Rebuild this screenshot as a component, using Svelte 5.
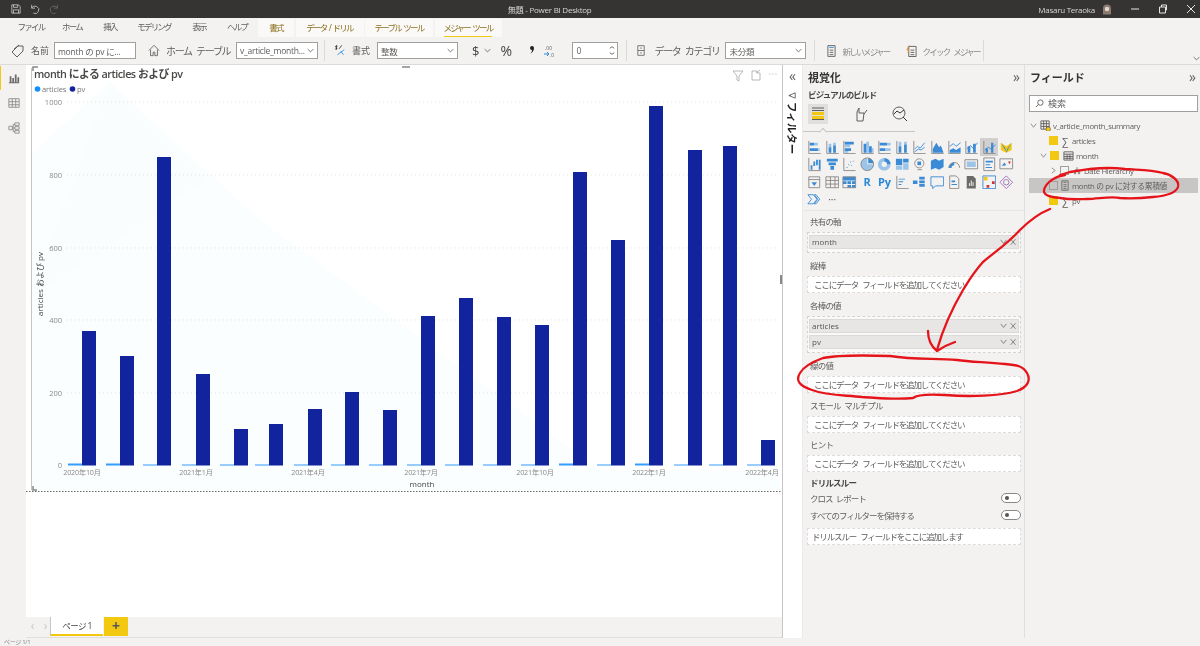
<script>
  const tabs = [['ファイル',38],['ホーム',44],['挿入',32],['モデリング',56],['表示',34],['ヘルプ',42]];
  const ctx = [['書式',36,false],['データ / ドリル',68,false],['テーブル ツール',68,false],['メジャー ツール',67,true]];
  const bars = [[82,331,2],[120,356,2],[157,157,1],[196,374,1],[234,429,1],[269,424,1],[308,409,1],[345,392,1],[383,410,1],[421,316,1],[459,298,1],[497,317,1],[535,325,1],[573,172,2],[611,240,1],[649,106,2],[688,150,1],[723,146,1],[761,440,1]];
  const yt = [[1000,102],[800,175],[600,248],[400,320],[200,393],[0,465]];
  const xt = [['2020年10月',82],['2021年1月',196],['2021年4月',308],['2021年7月',421],['2021年10月',535],['2022年1月',649],['2022年4月',762]];
  const ax = 'M2 1V15H15';
  const icons = [
    {g:ax,b:'M3 3h5v3H3zM3 9h9v3H3z',l:'M8 3h4v3H8zM12 9h2v3h-2z'},
    {g:ax,b:'M4 8h3v6H4zM9 6h3v8H9z',l:'M4 4h3v4H4zM9 3h3v3H9z'},
    {g:ax,b:'M3 2h10v3H3zM3 9h7v3H3z',l:'M3 5h6v3H3zM3 12h4v2H3z'},
    {g:ax,b:'M4 4h3v10H4zM10 7h3v7h-3z',l:'M7 2h3v12H7zM13 9h2v5h-2z'},
    {g:ax,b:'M3 3h8v3H3zM3 9h6v3H3z',l:'M11 3h4v3h-4zM9 9h6v3H9z'},
    {g:ax,b:'M4 7h3v7H4zM10 5h3v9h-3z',l:'M4 2h3v5H4zM10 2h3v3h-3z'},
    {g:ax,s:'M3 10l3-3 3 2 5-6M3 13l4-3 3 1 4-3'},
    {g:ax,b:'M3 14V10l4-7 3 5 2-2 3 8z'},
    {g:ax,b:'M3 14v-3l4-2 3 2 5-3v6z',s:'M3 7l4-3 3 3 5-4'},
    {g:ax,b:'M4 7h3v7H4zM10 4h3v10h-3z',s:'M3 10l4-4 3 3 5-6'},
    {g:ax,b:'M4 9h2.500v5H4zM10 3h2.500v11H10z',s:'M3 11l4-3 3 2 5-5'},
    {y:'M2 3l6 4v7l-6-3zM8 7l6-4v8l-6 3z',b:'M2 3l5 6 1 5 6-11-5 7-1 3z'},
    {g:ax,b:'M4 9h2v5H4zM7 5h2v5H7zM10 3h2v6h-2zM13 3h2v11h-2z'},
    {b:'M2 2h12v3H2zM4 6h8v3H4zM6 10h4v4H6z'},
    {g:ax,b:'M5 11h1v1H5zM7 8h1v1H7zM10 9h1v1h-1zM12 4h1v1h-1zM9 5h1v1H9z'},
    {l:'M8 1a7 7 0 1 0 7 7H8z',g:'M8 1a7 7 0 1 1-7 7 7 7 0 0 1 7-7z',b:'M9 1a7 7 0 0 1 6 6H9z'},
    {b:'M8 1a7 7 0 0 1 7 7h-4a3 3 0 0 0-3-3z',l:'M15 8a7 7 0 1 1-7-7v4a3 3 0 1 0 3 3z'},
    {b:'M1 2h7v7H1zM9 2h6v4H9z',l:'M1 10h7v4H1zM9 7h6v7H9z'},
    {g:'M8 2a5 5 0 1 0 .1 0zM6 14h5',b:'M6 5h4v4H6z'},
    {b:'M1 4l5-2 4 2 5-2v9l-5 3-4-2-5 2z'},
    {g:'M2 12a6 6 0 0 1 12 0',b:'M2 12a6 6 0 0 1 6-6v3a3 3 0 0 0-3 3z'},
    {g:'M1 3h14v10H1z',l:'M3 5h10v6H3z'},
    {g:'M2 1h12v14H2z',b:'M4 4h8v2H4zM4 8h5v1H4zM4 11h7v1H4z'},
    {g:'M1 2h14v11H1z',b:'M3 10l3-4 2 3z',r:'M10 5h3l-1.500 3z'},
    {g:'M2 2h12v12H2zM2 5h12',b:'M5 8h6l-3 4z'},
    {g:'M1 2h14v12H1zM1 6h14M1 10h14M6 2v12M11 2v12'},
    {g:'M1 2h14v12H1z',b:'M1 2h14v4H1zM1 7h4v3H1zM6 7h4v3H6zM11 7h4v3h-4zM6 11h4v3H6zM11 11h4v3h-4z'},
    {t:'R'},{t:'Py'},
    {g:ax,b:'M4 4h7v1H4zM4 7h5v1H4zM4 10h3v1H4z',r:''},
    {b:'M1 6h5v4H1zM8 2h6v3H8zM8 6h6v3H8zM8 10h6v3H8z'},
    {s:'M1 2h14v10H6l-3 3v-3H1z'},
    {g:'M3 1h7l3 3v11H3z',b:'M5 6h4v2H5zM5 10h6v1H5z'},
    {d:'M3 1h7l3 3v11H3z',w:'M6 12V9M8 12V6M10 12V8'},
    {s:'M1 1h14v14H1z',y:'M2 2h4v4H2z',r2:'M11 7h3v3h-3zM5 11h3v3H5z'},
    {p:'M8 1l7 7-7 7-7-7zM5 8a3 3 0 1 0 6 0 3 3 0 1 0-6 0'},
    {s:'M1 3h6l4 5-4 5H1l4-5zM8 3h2l4 5-4 5H8l4-5z'}
  ];
</script>

{#snippet chev()}<svg class="chev" viewBox="0 0 10 6"><path d="M1 1l4 4 4-4"/></svg>{/snippet}
{#snippet field(name)}
  <div class="field"><span>{name}</span><svg viewBox="0 0 24 10"><path d="M1 2l4 5 4-5M15 1l7 8M22 1l-7 8"/></svg></div>
{/snippet}
{#snippet drop(t)}<div class="drop">{t}</div>{/snippet}

<div class="app">
  <header class="title">
    <div class="qa">
      <svg viewBox="0 0 12 12"><path d="M1 1h8l2 2v8H1zM3 1v3h5V1M3 11V7h6v4"/></svg>
      <svg viewBox="0 0 12 12"><path d="M2 1v4h4M2 5a4.500 4.500 0 1 1 2 6"/></svg>
      <svg class="dim" viewBox="0 0 12 12"><path d="M10 1v4H6M10 5a4.500 4.500 0 1 0-2 6"/></svg>
    </div>
    <div class="doc">無題 - Power BI Desktop</div>
    <div class="user">Masaru Teraoka
      <svg class="face" viewBox="0 0 10 10"><path d="M1 10V4a4 4 0 0 1 8 0v6z" fill="#8a7a70"/><circle cx="5" cy="4.500" r="2.200" fill="#e6d8cf"/></svg>
    </div>
    <div class="win">
      <svg viewBox="0 0 10 10"><path d="M1 5h8"/></svg>
      <svg viewBox="0 0 10 10"><path d="M1.500 3h6v6h-6zM3.500 3V1h5v5H7.500"/></svg>
      <svg viewBox="0 0 10 10"><path d="M1 1l8 8M9 1l-8 8"/></svg>
    </div>
  </header>

  <nav class="tabs">
    {#each tabs as t}<span class="tab" style="width:{t[1]}px">{t[0]}</span>{/each}
    <div class="ctx">
      {#each ctx as c}<span class="ctab" style="width:{c[1]}px"><i class:on={c[2]}>{c[0]}</i></span>{/each}
    </div>
  </nav>

  <div class="ribbon">
    <svg class="ic tag" viewBox="0 0 14 14"><path d="M1 8l6-6h5v5l-6 6zM10 4h.1M3 5l5-4"/></svg>
    <span class="lb w-name">名前</span>
    <div class="inp i1">month の pv に...</div>
    <svg class="ic home" viewBox="0 0 14 14"><path d="M1 7l6-6 6 6M3 6v7h3V9h2v4h3V6"/></svg>
    <span class="lb big w-home">ホーム テーブル</span>
    <div class="inp i2">v_article_month...{@render chev()}</div>
    <div class="sep s1"></div>
    <svg class="ic fmt" viewBox="0 0 14 14"><path class="dk" d="M1 5c1 1 3 0 2-1S1 3 2 2s2 0 2 0M3 1v5M6 5l3-4"/><path class="bl" d="M4 12l8-6M8 8l3 4"/></svg>
    <span class="lb w-fmt">書式</span>
    <div class="inp i3">整数{@render chev()}</div>
    <span class="sym dollar">$</span>{@render chev()}
    <span class="sym pct">%</span>
    <svg class="comma" viewBox="0 0 6 10"><path d="M1 3a2 2 0 1 1 4 0c0 3-2 5-4 6 1-1 2-2 2-4a2 2 0 0 1-2-2z"/></svg>
    <svg class="ic dec" viewBox="0 0 12 14"><text x="2" y="6" class="dectx">.00</text><path class="bl" d="M1 10h5M4 8l2 2-2 2"/><text x="7" y="12.500" class="dectx">.0</text></svg>
    <div class="inp i4">0<svg class="spin" viewBox="0 0 8 14"><path d="M1 4l3-2 3 2M1 10l3 2 3-2"/></svg></div>
    <div class="sep s2"></div>
    <svg class="ic cat" viewBox="0 0 10 14"><path d="M1 1h8v12H1zM1 7h8M4 4h2M4 10h2"/></svg>
    <span class="lb big w-cat">データ カテゴリ</span>
    <div class="inp i5">未分類{@render chev()}</div>
    <div class="sep s3"></div>
    <svg class="ic calc" viewBox="0 0 10 14"><path d="M1 1h8v12H1z"/><path class="bl" d="M2.500 3h5"/><path d="M3 6h4M3 8.500h4M3 11h4"/></svg>
    <span class="lb dimtx w-new">新しいメジャー</span>
    <svg class="ic calc2" viewBox="0 0 12 14"><path d="M3 2h8v11H3zM5 6h4M5 8.500h4M5 11h4"/><path class="or" d="M3 1L1 6h2l-1 3"/></svg>
    <span class="lb dimtx w-quick">クイック メジャー</span>
    <div class="sep s4"></div>
    <div class="rchev">{@render chev()}</div>
  </div>

  <main class="main">
    <aside class="nav">
      <div class="navi on"><svg viewBox="0 0 14 14"><path class="fillg" d="M1 12h12v1H1zM2 5h2v7H2zM5 7h2v5H5zM8 3h2v9H8zM11 6h2v6h-2z"/></svg></div>
      <div class="navi"><svg viewBox="0 0 14 14"><path d="M1 2h12v10H1zM1 5.500h12M1 9h12M5 2v10M9 2v10"/></svg></div>
      <div class="navi"><svg viewBox="0 0 14 14"><path d="M1 5h4v4H1zM8 1h5v3H8zM8 5.500h5v3H8zM8 10h5v3H8zM5 7h3M6 3h2M6 11h2M6 3v8"/></svg></div>
    </aside>

    <section class="canvas">
      <div class="report">
        <svg class="chart" viewBox="26 65 756 432">
          <polygon points="110,82 30,155 30,490 780,490 780,470 600,470 260,220" fill="#fbfefe"/>
          <polygon points="110,82 205,180 30,300" fill="#f9fdfd"/>
          <path d="M33 71V67h5" class="handle"/><path d="M33 486v4h4" class="handle"/><path d="M402 67h8" class="handle"/>
          <line x1="31.500" y1="68" x2="31.500" y2="490" stroke="#c8c6c4"/>
          <line x1="781" y1="275" x2="781" y2="284" stroke="#888" stroke-width="2"/>
          <line x1="26" y1="491.500" x2="782" y2="491.500" stroke="#666" stroke-dasharray="1.500 1.500"/>
          <text x="34" y="78" class="ctitle">month による articles および pv</text>
          <circle cx="37.500" cy="89" r="2.800" fill="#118dff"/><text x="42" y="92" class="leg">articles</text>
          <circle cx="72.500" cy="89" r="2.800" fill="#12239e"/><text x="77" y="92" class="leg">pv</text>
          <g fill="none" stroke="#a8a6a4" stroke-width=".8">
            <path d="M733 71h10l-4 5v5l-2-1v-4z"/><path d="M752 71h5v2h3v7h-8zM756 73l4-3"/>
          </g>
          <g fill="#a8a6a4"><circle cx="770" cy="74" r=".6"/><circle cx="773" cy="74" r=".6"/><circle cx="776" cy="74" r=".6"/></g>
          {#each yt as t}
            <text x="62" y={t[1]+2.500} class="tick" text-anchor="end">{t[0]}</text>
            {#if t[0]}<line x1="67" x2="778" y1={t[1]} y2={t[1]} stroke="#d8d8d8" stroke-width=".7" stroke-dasharray="1 3"/>{/if}
          {/each}
          {#each bars as b}
            <rect x={b[0]-14} y={465.500-b[2]} width="14" height={b[2]} fill="#118dff" opacity=".85"/>
            <rect x={b[0]} y={b[1]} width="14" height={465.500-b[1]} fill="#12239e"/>
          {/each}
          {#each xt as t}<text x={t[1]} y="475" class="tick xl" text-anchor="middle">{t[0]}</text>{/each}
          <text x="422" y="487" class="axt" text-anchor="middle">month</text>
          <text transform="translate(43 284) rotate(-90)" class="axt" text-anchor="middle">articles および pv</text>
        </svg>
      </div>
      <div class="pages">
        <span class="arrow">‹</span><span class="arrow">›</span>
        <div class="page">ページ 1</div>
        <div class="add">+</div>
      </div>
    </section>

    <aside class="filters">
      <div class="coll">«</div>
      <svg class="fic" viewBox="0 0 10 10"><path d="M1 5l7-3v6zM1 5h2"/></svg>
      <div class="ftext">フィルター</div>
    </aside>

    <aside class="viz">
      <div class="phead"><h2>視覚化</h2><span class="dbl">»</span></div>
      <h3>ビジュアルのビルド</h3>
      <div class="vtabs">
        <div class="vtab on"><svg viewBox="0 0 16 16"><path d="M2 2h12M2 4.500h12M2 13.500h12" stroke="#605e5c" fill="none"/><path d="M2 6h12v3H2zM2 10h12v3H2z" fill="#f2c811"/></svg></div>
        <div class="vtab t2"><svg viewBox="0 0 16 16"><path d="M5 15V6l2-4v5h5l-1 8zM12 8l3-4" fill="none" stroke="#605e5c"/></svg></div>
        <div class="vtab t3"><svg viewBox="0 0 16 16"><circle cx="7" cy="7" r="6" fill="none" stroke="#605e5c"/><path d="M2 8l3-3 3 2 4-3M11 11l4 4" fill="none" stroke="#333"/></svg></div>
      </div>
      <div class="gal">
        {#each icons as ic, i}
          <div class="gi" class:active={i===10}>
            {#if ic.t}<span class="gt">{ic.t}</span>{:else}
            <svg viewBox="0 0 16 16">
              {#if ic.l}<path d={ic.l} fill="#9cc3e8"/>{/if}
              {#if ic.y}<path d={ic.y} fill="#f2c811"/>{/if}
              {#if ic.b}<path d={ic.b} fill="#3a8ad6"/>{/if}
              {#if ic.r}<path d={ic.r} fill="#d13438"/>{/if}
              {#if ic.r2}<path d={ic.r2} fill="#d13438"/>{/if}
              {#if ic.g}<path d={ic.g} fill="none" stroke="#8a8886"/>{/if}
              {#if ic.s}<path d={ic.s} fill="none" stroke="#3a8ad6"/>{/if}
              {#if ic.p}<path d={ic.p} fill="none" stroke="#9a6fb8"/>{/if}
              {#if ic.d}<path d={ic.d} fill="#6b6a68"/>{/if}
              {#if ic.w}<path d={ic.w} fill="none" stroke="#fff"/>{/if}
            </svg>{/if}
          </div>
        {/each}
        <div class="gi more">···</div>
      </div>
      <div class="wells">
        <label>共有の軸</label>
        <div class="box b1">{@render field('month')}</div>
        <label>縦棒</label>
        {@render drop('ここにデータ フィールドを追加してください')}
        <label>各棒の値</label>
        <div class="box b2">{@render field('articles')}{@render field('pv')}</div>
        <label>線の値</label>
        {@render drop('ここにデータ フィールドを追加してください')}
        <label>スモール マルチプル</label>
        {@render drop('ここにデータ フィールドを追加してください')}
        <label>ヒント</label>
        {@render drop('ここにデータ フィールドを追加してください')}
        <h4>ドリルスルー</h4>
        <div class="tog"><span>クロス レポート</span><i></i></div>
        <div class="tog"><span>すべてのフィルターを保持する</span><i></i></div>
        <div class="drop last">ドリルスルー フィールドをここに追加します</div>
      </div>
    </aside>

    <aside class="fields">
      <div class="phead"><h2>フィールド</h2><span class="dbl">»</span></div>
      <div class="search"><svg viewBox="0 0 10 10"><circle cx="6" cy="4" r="3"/><path d="M4 6L1 9"/></svg>検索</div>
      <div class="tree">
        <div class="row r0"><svg class="tw" viewBox="0 0 8 8"><path d="M1 2l3 4 3-4"/></svg>
          <svg class="tb" viewBox="0 0 12 12"><path d="M1 1h9v9H1zM1 4h9M1 7h9M4 1v9M7 1v9" fill="none" stroke="#605e5c"/><circle cx="9" cy="10" r="2.500" fill="#f2c811" stroke="#333" stroke-width=".5"/></svg>
          <span>v_article_month_summary</span></div>
        <div class="row r1"><b class="ck y"></b><em>∑</em><span>articles</span></div>
        <div class="row r1b"><svg class="tw" viewBox="0 0 8 8"><path d="M1 2l3 4 3-4"/></svg><b class="ck y"></b>
          <svg class="tb cal" viewBox="0 0 12 12"><path d="M1 2h10v9H1zM1 4.500h10M1 7h10M1 9h10M4.500 4.500v6M7.500 4.500v6" fill="none" stroke="#605e5c"/></svg><span>month</span></div>
        <div class="row r2"><svg class="tw" viewBox="0 0 8 8"><path d="M2 1l4 3-4 3"/></svg><b class="ck"></b>
          <svg class="tb sm" viewBox="0 0 12 12"><path d="M6 1v4M3 5h6M3 5v3M9 5v3M2 8h2v3H2zM8 8h2v3H8z" fill="none" stroke="#605e5c"/></svg><span>Date Hierarchy</span></div>
        <div class="row sel"><b class="ck"></b>
          <svg class="tb calc3" viewBox="0 0 10 14"><path d="M1 1h8v12H1zM3 3h4M3 6h4M3 8.500h4M3 11h4" fill="none" stroke="#605e5c"/></svg><span>month の pv に対する累積値</span></div>
        <div class="row r1"><b class="ck y"></b><em>∑</em><span>pv</span></div>
      </div>
    </aside>
  </main>
  <footer class="status">ページ 1/1</footer>

  <svg class="ink" viewBox="0 0 1200 646">
    <path d="M1065 175C1056 176 1046 182 1044 190C1043 196 1052 197 1060 198C1072 200 1082 199 1087 199C1098 199 1110 196 1120 198C1133 199 1144 198 1153 197C1165 196 1176 193 1178 187C1180 180 1170 174 1163 173C1150 169 1137 170 1125 169C1112 167 1090 168 1070 172L1060 175"/>
    <path d="M1050 209C1040 213 1030 220 1020 230C1008 243 995 252 983 262C973 273 968 282 963 290C953 307 944 325 937 350"/>
    <path d="M928 331C928 340 932 347 937 351C943 347 949 344 955 342"/>
    <path d="M890 356C860 355 838 355 823 358C812 362 804 366 800 373C795 381 800 386 812 390C828 396 845 395 862 397C880 398 896 400 913 398C918 394 930 394 945 395C970 397 1000 396 1017 391C1028 387 1031 380 1027 373C1023 366 1017 365 1005 364C985 362 970 362 957 360C935 358 915 360 890 356"/>
  </svg>
</div>

<style>
  :global(body){margin:0;background:#fff}
  .app{position:relative;width:1200px;height:646px;overflow:hidden;display:flex;flex-direction:column;background:#f3f2f1;color:#605e5c;font:9px "Open Sans","Noto Sans CJK JP",sans-serif;filter:blur(.3px)}
  .title{height:18px;flex:none;background:#353433;color:#d8d6d4;display:flex;align-items:center;font-size:8px;letter-spacing:-.25px}
  .qa{display:flex;gap:9px;padding-left:11px;width:497px;flex:none}
  .qa svg{width:10px;height:10px;fill:none;stroke:#c8c6c4}
  .qa .dim{stroke:#6e6c6a}
  .user{margin-left:auto;display:flex;gap:7px;align-items:center}
  .face{width:10px;height:11px}
  .win{margin-left:18px;margin-right:4px;display:flex;gap:18px}
  .win svg{width:10px;height:10px;fill:none;stroke:#e8e6e4}
  .tabs{height:19px;flex:none;display:flex;padding-left:12px;font-size:8.500px;letter-spacing:-1.800px;word-spacing:2px;background:#f3f2f1}
  .tab{text-align:center;line-height:18px;flex:none}
  .ctx{height:18px;margin-top:1px;display:flex;gap:1.500px;flex:none}
  .ctab{background:#faf9f8;text-align:center;color:#8b6f1f;line-height:17px}
  .ctab i{font-style:normal;display:inline-block;height:17px}
  .ctab i.on{border-bottom:1.500px solid #f2c811}
  .ribbon{height:28px;flex:none;display:flex;align-items:center;background:#f3f2f1;border-bottom:1px solid #dcdad8;box-sizing:border-box;font-size:10px;position:relative}
  .ic{fill:none;stroke:#605e5c;flex:none}
  .bl{stroke:#2b88d8}.or{stroke:#e8912a}.dk{stroke:#333}
  .tag{width:14px;height:14px;margin-left:11px}
  .lb{margin-left:6px;flex:none;white-space:nowrap}
  .big{font-size:10px;letter-spacing:-1.300px;word-spacing:3px}
  .dimtx{font-size:8.500px;color:#8a8886;letter-spacing:-1.700px;word-spacing:3px}
  .w-name{width:17px;font-size:9px}
  .inp{height:17px;box-sizing:border-box;border:1px solid #a19f9d;background:#fff;display:flex;align-items:center;justify-content:space-between;padding:0 3px;flex:none;margin-left:6px;font-size:8.500px;white-space:nowrap;letter-spacing:-.25px;overflow:hidden}
  .chev{width:7px;height:5px;fill:none;stroke:#444;flex:none}
  .i1{width:82px}
  .home{width:12px;height:13px;margin-left:12px}
  .w-home{width:64px}
  .i2{width:82px}
  .sep{width:1px;height:21px;background:#dcdad8;flex:none}
  .s1{margin-left:6px}
  .fmt{width:12px;height:13px;margin-left:9px}
  .w-fmt{width:18px;font-size:9px}
  .i3{width:81px;margin-left:7px}
  .sym{flex:none;color:#444}
  .dollar{font-size:13px;margin:0 5px 0 14px}
  .pct{font-size:14px;margin-left:9px;width:13px}
  .comma{width:6px;height:10px;flex:none;margin-left:16px;fill:#222;position:relative;top:-1px}
  .dec{width:12px;height:14px;margin-left:8px;stroke:none}
  .dec .bl{fill:none}
  .dectx{font-size:5px;fill:#605e5c;font-family:"Open Sans",sans-serif}
  .i4{width:46px;margin-left:17px;padding-right:2px}
  .spin{width:6px;height:13px;fill:none;stroke:#444}
  .s2{margin-left:8px}
  .cat{width:8px;height:13px;margin-left:10px}
  .w-cat{width:65px;margin-left:9px}
  .i5{width:81px;margin-left:6px}
  .s3{margin-left:8px}
  .calc{width:9px;height:14px;margin-left:12px}
  .w-new{width:48px;margin-left:6px}
  .calc2{width:11px;height:14px;margin-left:16px}
  .w-quick{width:53px;margin-left:5px}
  .s4{margin-left:8px}
  .rchev{position:absolute;right:0;bottom:0}
  .main{flex:1;display:flex;min-height:0}
  .nav{width:26px;flex:none;background:#f3f2f1;padding-top:1px}
  .navi{height:25px;display:flex;align-items:center;justify-content:center;box-sizing:border-box;border-left:1.500px solid transparent}
  .navi.on{border-left-color:#f2c811;height:24px}
  .navi svg{width:12px;height:12px;fill:none;stroke:#8a8886}
  .navi .fillg{fill:#6e6c6a;stroke:none}
  .canvas{width:756px;flex:none;display:flex;flex-direction:column;background:#fff;border-right:1px solid #c8c6c4;box-sizing:content-box}
  .report{flex:1;min-height:0}
  .chart{display:block;width:756px;height:432px;font-family:"Open Sans","Noto Sans CJK JP",sans-serif}
  .handle{fill:none;stroke:#888;stroke-width:1.500}
  .ctitle{font-size:10.800px;font-weight:600;fill:#4a4947;letter-spacing:-.5px}
  .leg{font-size:7.500px;fill:#777;letter-spacing:-.1px}
  .tick{font-size:7.500px;fill:#8a8886}
  .xl{font-size:7.200px;letter-spacing:-.2px}
  .axt{font-size:8px;fill:#444}
  .pages{height:21px;flex:none;background:#f3f2f1;display:flex;align-items:stretch;padding-bottom:1px;box-sizing:border-box;border-bottom:1px solid #e1dfdd}
  .arrow{width:13px;text-align:center;color:#c8c6c4;font-size:12px;line-height:18px}
  .page{width:53px;background:#fff;text-align:center;color:#444;font-size:8.500px;line-height:17px;letter-spacing:-.6px;border-left:1px solid #c8c6c4;border-bottom:2px solid #f2c811;box-sizing:border-box;margin-left:-2px}
  .add{width:24px;background:#f2c811;color:#555;text-align:center;font:700 14px/18px "Open Sans",sans-serif;margin-left:1px}
  .filters{width:19px;flex:none;background:#fff;display:flex;flex-direction:column;align-items:center}
  .coll{font-size:14px;line-height:14px;color:#605e5c;margin-top:4px}
  .fic{width:9px;height:9px;fill:none;stroke:#605e5c;margin-top:8px}
  .ftext{writing-mode:vertical-rl;text-orientation:sideways;font-size:10.500px;font-weight:700;color:#222;margin-top:2px}
  .viz{width:223px;flex:none;background:#f3f2f1;border-right:1px solid #e1dfdd;box-sizing:border-box;border-left:1px solid #edebe9}
  .phead{display:flex;justify-content:space-between;align-items:center;height:24px;padding:0 4px 0 5px}
  h2{font-size:11px;margin:0;color:#333;font-weight:700}
  .dbl{font-size:14px;color:#605e5c;line-height:14px}
  h3{font-size:8.500px;margin:0 0 0 5px;font-weight:600;color:#444;line-height:12px;letter-spacing:-.8px}
  .vtabs{display:flex;height:24px;margin:3px 0 0 5px;position:relative;padding-bottom:3px}
  .vtabs::before{content:"";position:absolute;left:12px;top:24.500px;width:5px;height:5px;border-left:1px solid #c8c6c4;border-top:1px solid #c8c6c4;background:#f3f2f1;transform:rotate(45deg);z-index:1}
  .vtabs::after{content:"";position:absolute;left:-5px;top:27px;width:112px;height:1px;background:#c8c6c4}
  .vtab{width:20px;height:20px;display:flex;align-items:center;justify-content:center}
  .vtab.on{background:#e1dfdd}
  .vtab svg{width:16px;height:16px}
  .t2{margin-left:22px}
  .t3{margin-left:20px}
  .gal{display:grid;grid-template-columns:repeat(12,17.450px);grid-auto-rows:17.500px;padding:7px 0 4px 3px;border-bottom:1px solid #e8e6e4;height:80px;box-sizing:border-box;align-content:start}
  .gi{display:flex;align-items:center;justify-content:center}
  .gi svg{width:14.500px;height:14.500px}
  .gi.active{background:#d2d0ce}
  .gt{font:700 11px "Open Sans",sans-serif;color:#2b88d8}
  .more{color:#605e5c;font-size:10px}
  .wells{padding:4.500px 3px 0 4px}
  label{display:block;font-size:8.500px;line-height:11px;padding:0 3px;margin:0 0 5px;color:#605e5c;letter-spacing:-.8px;word-spacing:2px}
  .box{border:1px dashed #d6d4d2;padding:2px 1px;background:#faf9f8;display:flex;flex-direction:column;gap:2px;box-sizing:border-box}
  .b1{height:21px;margin-bottom:7.500px}
  .b2{height:37px;margin-bottom:7.500px}
  .field{height:14px;box-sizing:border-box;background:#e8e6e4;border:1px solid #dcdad8;display:flex;justify-content:space-between;align-items:center;padding:0 1px 0 2px;font-size:8px;color:#555}
  .field svg{width:17px;height:8px;fill:none;stroke:#605e5c}
  .drop{height:17px;line-height:16px;box-sizing:border-box;border:1px dashed #dedcda;background:#fff;padding-left:6px;font-size:8.500px;letter-spacing:-1.150px;word-spacing:3px;color:#605e5c;margin-bottom:6.500px;white-space:nowrap}
  h4{font-size:8.500px;margin:-1.500px 0 1px;line-height:11px;padding-left:3px;color:#444;font-weight:700;letter-spacing:-.8px}
  .tog{display:flex;justify-content:space-between;align-items:center;height:17px;padding:0 0 0 3px;font-size:8.500px;letter-spacing:-1px;word-spacing:2px}
  .tog i{width:20px;height:10px;border:1px solid #8a8886;border-radius:6px;box-sizing:border-box;position:relative;background:#fff}
  .tog i::after{content:"";position:absolute;left:3px;top:2px;width:4px;height:4px;border-radius:50%;background:#555}
  .last{padding-left:4px;margin-top:5px}
  .fields{flex:1;background:#f3f2f1}
  .search{height:17px;box-sizing:border-box;border:1px solid #a19f9d;background:#fff;margin:6px 2px 0 4px;display:flex;align-items:center;gap:4px;padding-left:5px;font-size:9px}
  .search svg{width:9px;height:9px;fill:none;stroke:#605e5c}
  .tree{margin-top:6px}
  .row{height:15px;display:flex;align-items:center;font-size:7.800px;letter-spacing:-.35px;color:#605e5c;white-space:nowrap}
  .r0{padding-left:5px;height:15px}
  .tw{width:7px;height:7px;fill:none;stroke:#8a8886;flex:none;margin-right:3px}
  .tb{width:11px;height:11px;flex:none;margin-right:2px}
  .tb.sm{width:8px;height:9px;margin-right:3px}
  .tb.cal{margin-right:2px}
  .ck{width:7px;height:7px;flex:none;border:1px solid #a19f9d;margin-right:4px;box-sizing:content-box}
  .ck.y{background:#f2c811;border-color:#f2c811}
  .row em{font-style:normal;width:8px;font-size:10px;margin-right:2px}
  .r1{padding-left:24px}
  .r1b{padding-left:15px}
  .r2{padding-left:25px}
  .sel{background:#c8c6c4;margin:0 2px 0 4px;padding-left:20px}
  .sel .ck{margin-right:3px}
  .calc3{width:8px;height:11px;margin-right:3px}
  .status{height:8px;flex:none;background:#f3f2f1;font-size:6px;line-height:8px;padding-left:4px;color:#888;letter-spacing:-.3px}
  .ink{position:absolute;inset:0;width:1200px;height:646px;fill:none;stroke:#e5141b;stroke-width:2.300;pointer-events:none;stroke-linecap:round}
</style>
